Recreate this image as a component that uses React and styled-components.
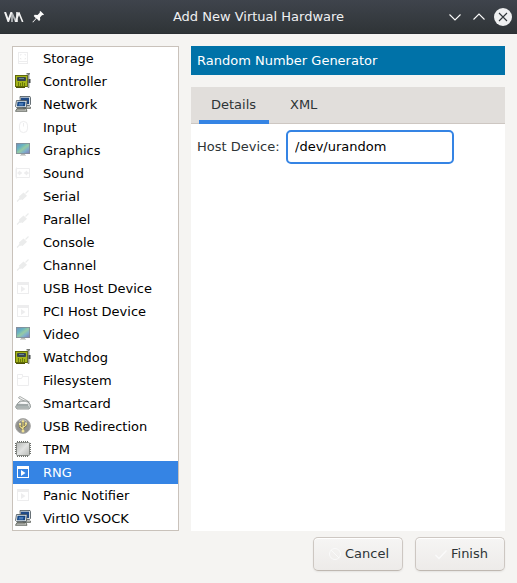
import React from 'react';
import styled, { createGlobalStyle, css } from 'styled-components';

const GlobalStyle = createGlobalStyle`
  * { box-sizing: border-box; }
  body { margin: 0; background: #f5f4f2; }
`;

const Window = styled.div`
  width: 517px;
  height: 583px;
  display: flex;
  flex-direction: column;
  background: #f5f4f2;
  color: #2e3436;
  font: 13px/16px 'DejaVu Sans', sans-serif;
  overflow: hidden;
`;

const TitleBar = styled.header`
  height: 34px;
  flex: none;
  display: grid;
  grid-template-columns: 85px 1fr 85px;
  align-items: center;
  background: linear-gradient(#3f444c, #2f3437);
  border-bottom: 1px solid #2b2f33;
  color: #eff0f1;
`;

const TitleIcons = styled.div`
  display: flex;
  align-items: center;
  padding-left: 4px;
  gap: 8px;
  svg { display: block; }
`;

const WindowControls = styled.div`
  display: flex;
  align-items: center;
  justify-content: flex-end;
  gap: 6px;
  padding-right: 5px;
  svg { display: block; }
`;

const Title = styled.h1`
  margin: 0;
  font: 13px/16px 'DejaVu Sans', sans-serif;
  text-align: center;
  white-space: nowrap;
`;

const Body = styled.main`
  height: 497px;
  flex: none;
  display: flex;
  gap: 12px;
  padding: 12px 12px 0;
`;

const HardwareList = styled.ul`
  width: 167px;
  height: 485px;
  flex: none;
  margin: 0;
  padding: 0;
  list-style: none;
  background: #fff;
  border: 1px solid #c9c2bb;
`;

const HardwareItem = styled.li`
  height: 23px;
  display: flex;
  align-items: center;
  gap: 12px;
  padding-left: 2px;
  color: ${(p) => (p.$selected ? '#fff' : '#000')};
  background: ${(p) => (p.$selected ? '#3584e4' : 'transparent')};
  white-space: nowrap;
  svg { flex: none; display: block; margin-top: -1px; }
`;

const Pane = styled.section`
  width: 314px;
  height: 485px;
  display: flex;
  flex-direction: column;
`;

const PaneHeader = styled.h2`
  height: 29px;
  margin: 0 0 12px;
  padding: 0 6px;
  font: inherit;
  line-height: 29px;
  color: #fff;
  background: #0072a8;
`;

const TabBar = styled.nav`
  height: 37px;
  flex: none;
  display: flex;
  gap: 9px;
  padding-left: 8px;
  background: #e1dedb;
  border-bottom: 1px solid #cdc7c2;
`;

const Tab = styled.div`
  height: 37px;
  min-width: ${(p) => (p.$active ? 70 : 52)}px;
  padding: 0 12px;
  line-height: 35px;
  ${(p) => p.$active && css`box-shadow: inset 0 -4px #3584e4;`}
`;

const TabPanel = styled.div`
  flex: 1;
  display: flex;
  align-items: flex-start;
  padding: 6px;
  background: #fff;
`;

const Label = styled.label`
  width: 89px;
  line-height: 33px;
  white-space: nowrap;
`;

const Entry = styled.input`
  width: 168px;
  height: 34px;
  padding: 0 7px 1px;
  border: 2px solid #3584e4;
  border-radius: 5px;
  outline: none;
  background: #fff;
  color: #000;
  font: 13px 'DejaVu Sans', sans-serif;
`;

const Actions = styled.footer`
  display: flex;
  justify-content: flex-end;
  gap: 12px;
  padding: 6px 12px 0;
`;

const Button = styled.button`
  width: 90px;
  height: 34px;
  display: flex;
  align-items: center;
  justify-content: flex-end;
  gap: ${(p) => p.$gap}px;
  padding: 0 ${(p) => p.$end}px 1px 0;
  border: 1px solid #cdc7c2;
  border-bottom-color: #bfb8b1;
  border-radius: 5px;
  background: linear-gradient(#f6f5f4, #edebe9);
  box-shadow: inset 0 1px #fff, 0 1px 2px rgba(0, 0, 0, 0.07);
  color: #2e3436;
  font: 13px 'DejaVu Sans', sans-serif;
`;

const Svg = ({ children, size = 16 }) => (
  <svg width={size} height={size} viewBox="0 0 16 16" fill="none">{children}</svg>
);

const faint = '#ededee';

const DiskIcon = () => (
  <Svg>
    <rect x="3.5" y="2.5" width="9" height="11" stroke={faint} />
    <path d="M5.5 5.5v-1h1M9.500 4.500h1v1M5.500 8v1h1M10.500 8v1h-1M4 11.500h8" stroke={faint} />
  </Svg>
);

const CardIcon = () => (
  <Svg>
    <path d="M0 2h13v12H0z" fill="#606908" />
    <path d="M1 3h11v10H1z" fill="#a5b51b" />
    <rect x="2" y="4" width="9" height="4" rx="1" fill="#38464b" />
    <rect x="4" y="5" width="5" height="1" fill="#668397" />
    <path d="M3.500 9V13M5.500 10v3M7.500 9V13M9.500 10v3" stroke="#687b09" />
    <path d="M1 14.500h9" stroke="#4c5306" />
    <path d="M11.500 .8h3.500M13.500 1v14" stroke="#777b76" strokeWidth="1.500" />
    <path d="M14 2v12" stroke="#bfc2be" />
    <path d="M14.500 6v4" stroke="#454b4b" strokeWidth="2" />
  </Svg>
);

const NetworkIcon = () => (
  <Svg>
    <path d="M5 .5h10l.500 1v7l-1 1H5.500z" fill="#d8dddf" stroke="#465057" strokeWidth=".8" />
    <path d="M6 1.700h8v6.300H6z" fill="#204a87" />
    <path d="M7 11h8.500v1.500H8" fill="#d3d7cf" stroke="#555753" strokeWidth=".7" />
    <path d="M1.500 4.500h10l.500 1-.700 6H1.500L.500 10.500z" fill="#e4e8e9" stroke="#465057" strokeWidth=".8" />
    <path d="M2.500 5.700h8l-.500 4.600H2z" fill="#164785" />
    <path d="M4 7h4.500L8 9.500H3.500z" fill="#4778b5" />
    <path d="M2 12.500h9l1 2.800H.500z" fill="#c7cbc5" stroke="#50554e" strokeWidth=".8" />
    <path d="M2 13.700h8" stroke="#888a85" />
  </Svg>
);

const MouseIcon = () => (
  <Svg>
    <rect x="4.500" y="2.500" width="8" height="11" rx="3.700" stroke={faint} />
    <path d="M8.500 4v3.500" stroke={faint} />
  </Svg>
);

const MonitorIcon = () => (
  <Svg>
    <defs>
      <linearGradient id="screen" x1="0" y1="0" x2="1" y2="1">
        <stop offset="0" stopColor="#7292bd" />
        <stop offset=".3" stopColor="#68b3c2" />
        <stop offset=".52" stopColor="#96cba4" />
        <stop offset=".72" stopColor="#7fb1cb" />
        <stop offset="1" stopColor="#827fba" />
      </linearGradient>
    </defs>
    <path d="M1 1h14v11H1z" fill="#858e96" />
    <path d="M1.800 1.800h12.400v9.400H1.800z" fill="url(#screen)" />
    <path d="M6 12h4v1H6z" fill="#b5b7b4" />
    <path d="M5 13.300h6" stroke="#cccecb" />
  </Svg>
);

const SoundIcon = () => (
  <Svg>
    <path d="M1 3.500h13.500v9H1zM1.500 2.500v11" stroke={faint} />
    <path d="M4.500 6v4M2.500 8H7M9 8h5M11.500 6v4" stroke={faint} />
    <path d="M4.500 5.500l2.300 2.500-2.300 2.500L2.500 8zM11.500 5.500l2 2.500-2 2.500L9.200 8z" fill={faint} />
  </Svg>
);

const PlugIcon = () => (
  <Svg>
    <path d="M2 13.500l3-3M10.500 5.500l3-3" stroke="#ebecec" strokeWidth="1.200" />
    <path d="M4 8.500l4.500-4 3.500 3.200L7.500 12l-1.300-.6-1.200.6-1.300-1.400.7-1z" fill="#ebecec" />
  </Svg>
);

const RunIcon = ({ color = faint }) => (
  <Svg>
    <path d="M2 2h12v12H2zM3 5v8h10V5z" fillRule="evenodd" fill={color} />
    <path d="M6 6l4.500 3L6 12z" fill={color} />
  </Svg>
);

const SelectedRunIcon = () => <RunIcon color="#fff" />;

const FolderIcon = () => (
  <Svg>
    <path d="M2.500 13.500v-11h5v2h6v9zM2.500 6.500h4l1-2" stroke={faint} />
  </Svg>
);

const ScannerIcon = () => (
  <Svg>
    <path d="M4 2l1-.5 9.500 5.500-1.500 1L3.500 3z" fill="#f4f5f5" stroke="#9b9e9c" strokeWidth=".8" />
    <path d="M2.500 8.500L5 6h7l3 3 .500 3-1.500 2H2L.500 12z" fill="#d4d8d8" stroke="#7f8583" strokeWidth=".8" />
    <path d="M4.500 8.500L6 7h5l2 2z" fill="#fafafa" />
    <path d="M2 10h11" stroke="#6b7776" />
    <path d="M1 12h13" stroke="#a1aaa9" strokeWidth="1.500" />
  </Svg>
);

const UsbIcon = () => (
  <Svg>
    <circle cx="8" cy="8" r="7.400" fill="#92928f" stroke="#a9a9a7" />
    <path d="M4 3.500Q8 0 12 3.500" stroke="#c2c2c0" />
    <path d="M8 3v10M8 11L5 8.500V6M8 9.500l3-2.200V5" stroke="#57522f" strokeWidth="2.200" />
    <path d="M8 3v10M8 11L5 8.500V6M8 9.500l3-2.200V5" stroke="#f0e294" strokeWidth="1.200" />
    <path d="M8 1.500l1.700 2.500H6.300z" fill="#f0e294" />
    <circle cx="8" cy="13" r="1.500" fill="#f0e294" />
    <path d="M4 5h2v2H4zM10 4.500h2v2h-2z" fill="#f0e294" />
  </Svg>
);

const ChipIcon = () => (
  <Svg>
    <defs>
      <linearGradient id="chip" x1="0" y1="0" x2="1" y2="1">
        <stop stopColor="#b5b7b5" />
        <stop offset=".5" stopColor="#e2e3e2" />
        <stop offset="1" stopColor="#b7b9b6" />
      </linearGradient>
    </defs>
    <path d="M2 1h12M2 15h12M1 2v12M15 2v12" stroke="#6d706c" strokeWidth="2" strokeDasharray="1 1" />
    <rect x="1.500" y="1.500" width="13" height="13" rx="1" fill="url(#chip)" stroke="#7c7f7b" strokeWidth=".9" />
  </Svg>
);

const hardware = [
  ['Storage', DiskIcon],
  ['Controller', CardIcon],
  ['Network', NetworkIcon],
  ['Input', MouseIcon],
  ['Graphics', MonitorIcon],
  ['Sound', SoundIcon],
  ['Serial', PlugIcon],
  ['Parallel', PlugIcon],
  ['Console', PlugIcon],
  ['Channel', PlugIcon],
  ['USB Host Device', RunIcon],
  ['PCI Host Device', RunIcon],
  ['Video', MonitorIcon],
  ['Watchdog', CardIcon],
  ['Filesystem', FolderIcon],
  ['Smartcard', ScannerIcon],
  ['USB Redirection', UsbIcon],
  ['TPM', ChipIcon],
  ['RNG', SelectedRunIcon],
  ['Panic Notifier', RunIcon],
  ['VirtIO VSOCK', NetworkIcon],
];

export default function App() {
  return (
    <Window>
      <GlobalStyle />
      <TitleBar>
        <TitleIcons>
          <svg width="20" height="10" viewBox="0 0 20 10" fill="none">
            <path d="M8 10V1l3.500 8L14 1" stroke="#b4b7ba" strokeWidth="1.700" />
            <path d="M1 0l3.300 9L7.500 0" stroke="#f2f2f2" strokeWidth="2" />
            <path d="M11.500 10L15 1l3.700 9M13 0v10" stroke="#f2f2f2" strokeWidth="1.600" />
          </svg>
          <svg width="13" height="12" viewBox="0 0 13 12">
            <path d="M8.500 0L12 3.500l-1 .8-.8-.2-2.200 2.300.2 2.600-1.200 1-2.400-2.400L1 11.500l-.6-.5 3.500-3.800L1.700 5l1-1.200 2.800.2 2.300-2.300-.2-.9z" fill="#fcfcfc" />
          </svg>
        </TitleIcons>
        <Title>Add New Virtual Hardware</Title>
        <WindowControls>
          <svg width="18" height="18" viewBox="0 0 18 18" fill="none">
            <path d="M3.500 6.500L9 12l5.500-5.500" stroke="#fcfcfc" strokeWidth="1.100" />
          </svg>
          <svg width="18" height="18" viewBox="0 0 18 18" fill="none">
            <path d="M3.500 11.500L9 6l5.500 5.500" stroke="#fcfcfc" strokeWidth="1.100" />
          </svg>
          <svg width="18" height="18" viewBox="0 0 18 18" fill="none">
            <circle cx="9" cy="9" r="9" fill="#eff0f1" />
            <path d="M5 5l8 8M13 5l-8 8" stroke="#31363b" strokeWidth="1.100" />
          </svg>
        </WindowControls>
      </TitleBar>
      <Body>
        <HardwareList>
          {hardware.map(([name, Icon]) => (
            <HardwareItem key={name} $selected={name === 'RNG'}>
              <Icon />
              {name}
            </HardwareItem>
          ))}
        </HardwareList>
        <Pane>
          <PaneHeader>Random Number Generator</PaneHeader>
          <TabBar>
            <Tab $active>Details</Tab>
            <Tab>XML</Tab>
          </TabBar>
          <TabPanel>
            <Label htmlFor="host-device">Host Device:</Label>
            <Entry id="host-device" defaultValue="/dev/urandom" />
          </TabPanel>
        </Pane>
      </Body>
      <Actions>
        <Button $end={13} $gap={2}>
          <Svg>
            <circle cx="8" cy="8" r="5.500" stroke="#fafafa" />
            <path d="M4 4l8 8" stroke="#fafafa" />
          </Svg>
          Cancel
        </Button>
        <Button $end={16} $gap={2}>
          <Svg>
            <path d="M2.500 9l3.500 3.500 7.500-8" stroke="#fafafa" strokeWidth="1.300" />
          </Svg>
          Finish
        </Button>
      </Actions>
    </Window>
  );
}
